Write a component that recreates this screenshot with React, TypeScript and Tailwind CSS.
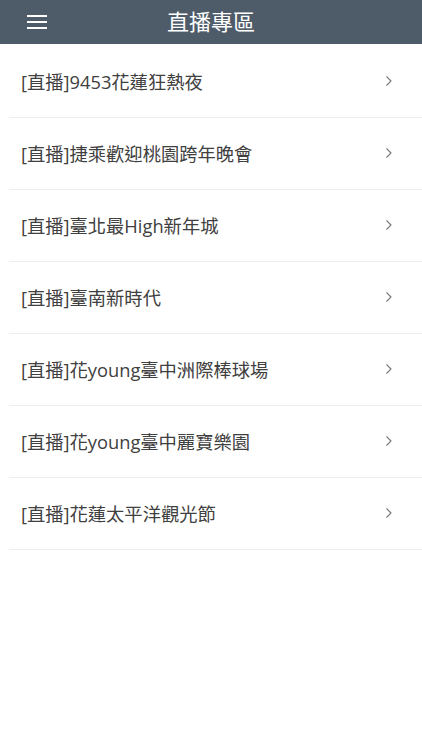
import React from "react";

const items = [
  "[直播]9453花蓮狂熱夜",
  "[直播]捷乘歡迎桃園跨年晚會",
  "[直播]臺北最High新年城",
  "[直播]臺南新時代",
  "[直播]花young臺中洲際棒球場",
  "[直播]花young臺中麗寶樂園",
  "[直播]花蓮太平洋觀光節",
];

export default function App() {
  return (
    <div
      className="w-[422px] h-[750px] bg-white overflow-hidden"
      style={{ fontFamily: '"Open Sans", "Noto Sans CJK TC", sans-serif' }}
    >
      <header className="h-[44px] bg-[#4e5b69] flex items-center relative">
        <div className="absolute left-[27px] top-[15px] flex flex-col gap-[4px]">
          <span className="block w-[20px] h-[2px] bg-white" />
          <span className="block w-[20px] h-[2px] bg-white" />
          <span className="block w-[20px] h-[2px] bg-white" />
        </div>
        <h1 className="w-full text-center text-white text-[22px] leading-none pb-[3px]">直播專區</h1>
      </header>
      <div className="pt-[2px]">
        {items.map((t) => (
          <div key={t} className="ml-[9px] h-[72px] border-b border-[#eeeeee] flex items-center pl-[12px] pr-[29px]">
            <span className="flex-1 text-[18.3px] text-[#404040] leading-none pt-[1px]">{t}</span>
            <svg width="8" height="12" viewBox="0 0 8 12" className="mb-[2px]">
              <path d="M1.5 1.5 L6 6 L1.5 10.5" fill="none" stroke="#777" strokeWidth="1.1" />
            </svg>
          </div>
        ))}
      </div>
    </div>
  );
}
